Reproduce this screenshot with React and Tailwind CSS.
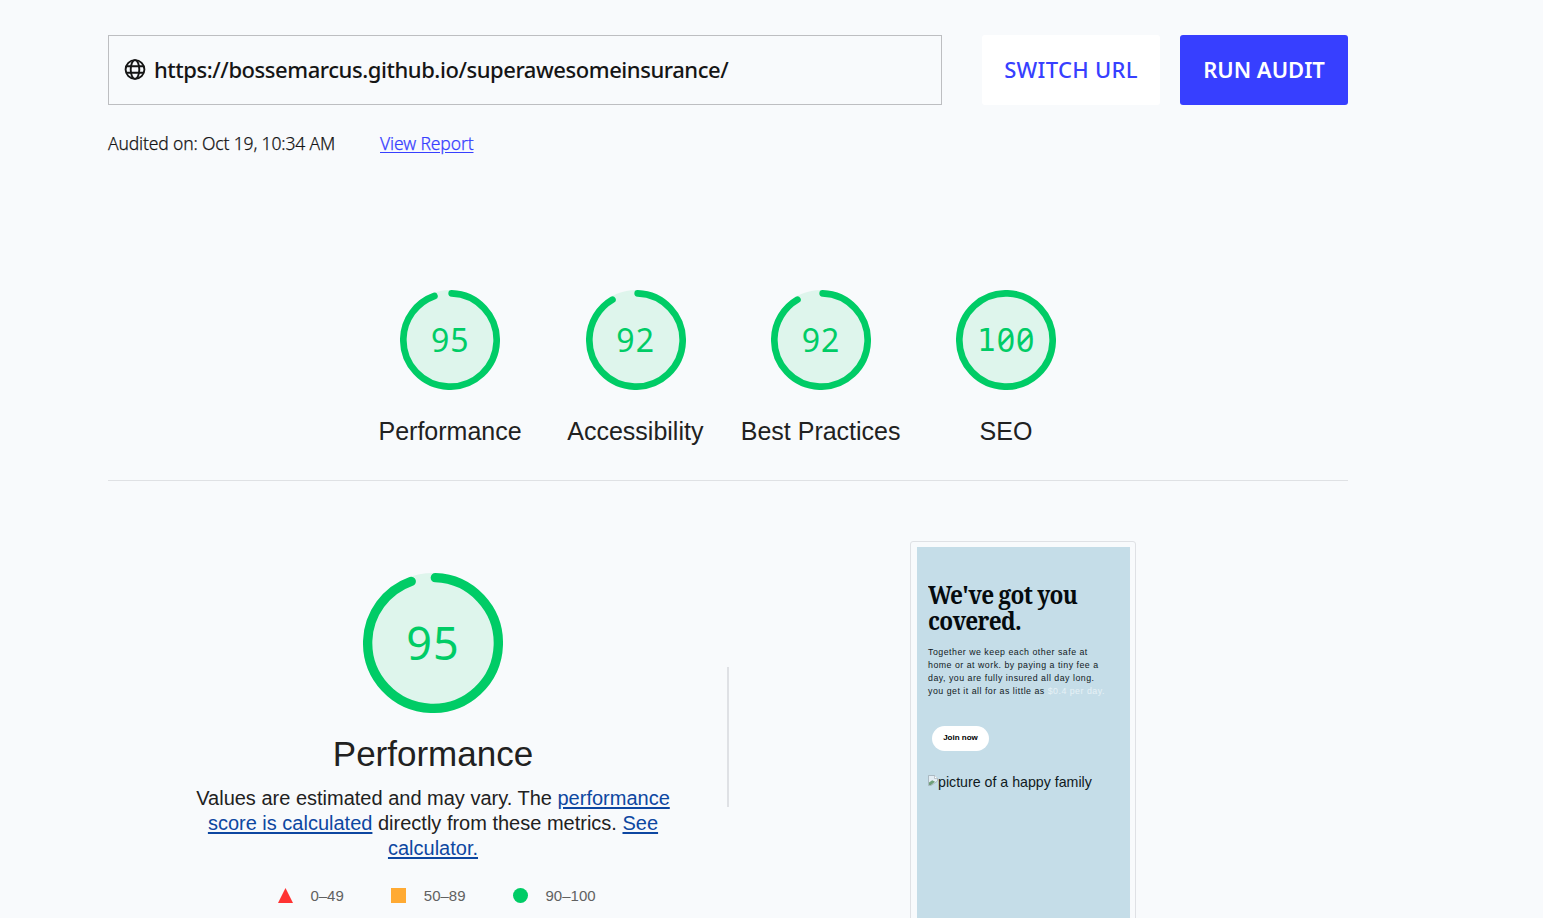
const GREEN = "#00cc66";

function Arc({ score, className }) {
  const circumference = 2 * Math.PI * 56;
  const length = score === 100 ? circumference : (score / 100) * circumference - 4;
  return (
    <svg viewBox="0 0 120 120" className={className} aria-hidden="true">
      <circle cx="60" cy="60" r="60" fill={GREEN} fillOpacity="0.1" />
      <circle
        cx="60"
        cy="60"
        r="56"
        fill="none"
        stroke={GREEN}
        strokeWidth="8"
        strokeLinecap="round"
        strokeDasharray={`${length} ${circumference}`}
        transform="rotate(-87.9537 60 60)"
      />
    </svg>
  );
}

function Digits({ value }) {
  return String(value)
    .split("")
    .map((d, i) => (
      <span
        key={i}
        className={
          d === "1"
            ? "font-['DejaVu_Sans_Mono'] text-[0.97em]"
            : "font-['Noto_Sans'] [font-feature-settings:'zero']"
        }
      >
        {d}
      </span>
    ));
}

function Gauge({ score, label }) {
  return (
    <div className="flex w-[185.3px] flex-col items-center">
      <div className="grid size-[100px] place-items-center">
        <Arc score={score} className="col-start-1 row-start-1 size-[100px]" />
        <div className="col-start-1 row-start-1 flex h-[32px] items-center text-[32px] leading-[32px] tracking-[1px] text-[#00cc66]">
          <Digits value={score} />
        </div>
      </div>
      <div className="mr-[0.6px] mt-[25px] whitespace-nowrap text-[25px] leading-[33px]">{label}</div>
    </div>
  );
}

function GlobeIcon() {
  return (
    <svg viewBox="0 0 22 22" className="mb-px size-[22px] shrink-0" fill="none" stroke="#151515" strokeWidth="1.9">
      <circle cx="11" cy="10.5" r="9.4" />
      <ellipse cx="11" cy="10.5" rx="4.3" ry="9.4" />
      <path d="M2.4 7.2h17.2M2.4 13.8h17.2" />
    </svg>
  );
}

function BrokenImage() {
  return (
    <svg viewBox="0 0 10 11" className="mt-[2px] h-[11px] w-[10px] shrink-0">
      <path d="M.5.5h6L9.5 3.5V6L3 10.5H.5z" fill="#e3edf4" stroke="#9aa7b0" strokeWidth=".7" />
      <path d="M1 7.6 4.2 5.2 7 6.8 3 9.9H1z" fill="#6f9f7a" />
      <path d="M6.5.5v3h3" fill="#fff" stroke="#9aa7b0" strokeWidth=".6" />
    </svg>
  );
}

function Link({ children }) {
  return (
    <a href="#calculator" className="text-[#0d47a1] underline decoration-2 underline-offset-[2px]">
      {children}
    </a>
  );
}

function Preview() {
  return (
    <div className="h-[400px] w-[226px] rounded-[3px] border border-[#dfe1e5] px-[6px] pt-[5px]">
      <div className="h-[394px] w-[213px] bg-[#c5dde8] pl-[11px] pt-[35px] text-[#10191d]">
        <h2 className="w-[160px] origin-left scale-x-[0.925] whitespace-nowrap font-['Noto_Serif','Liberation_Serif',serif] text-[24.5px] font-bold leading-[26px] tracking-[-0.8px] text-[#050b0e]">
          We've got you
          <br />
          covered.
        </h2>
        <p className="mt-[12.4px] whitespace-nowrap text-[8.8px] leading-[12.8px] tracking-[0.5px]">
          Together we keep each other safe at
          <br />
          home or at work. by paying a tiny fee a
          <br />
          day, you are fully insured all day long.
          <br />
          you get it all for as little as <span className="text-[#e6f1f6]">$0.4 per day.</span>
        </p>
        <div className="ml-[4px] mt-[28.4px] flex h-[25px] w-[57px] items-center justify-center rounded-full bg-white text-[8px] font-bold text-black">
          Join now
        </div>
        <div className="mt-[22px] flex">
          <BrokenImage />
          <span className="whitespace-nowrap text-[14.2px] leading-[18px]">picture of a happy family</span>
        </div>
      </div>
    </div>
  );
}

export default function App() {
  return (
    <div className="h-[918px] overflow-hidden bg-[#f8fafc] pl-[108px] pt-[35px] font-['Liberation_Sans',sans-serif] text-[#212121]">
      <main className="w-[1240px]">
        <header className="flex h-[70px] font-['Noto_Sans',sans-serif]">
          <div className="flex w-[834px] items-center border border-[#bdbec1] pl-[15px]">
            <GlobeIcon />
            <span className="ml-[8px] whitespace-nowrap pb-[2px] text-[22px] font-medium tracking-[-0.44px] text-[#151515]">
              https://bossemarcus.github.io/superawesomeinsurance/
            </span>
          </div>
          <button className="ml-[40px] w-[178px] whitespace-nowrap rounded-[3px] bg-white pb-[2px] text-[22px] font-medium tracking-[0.3px] text-[#373fff]">
            SWITCH URL
          </button>
          <button className="ml-[20px] w-[168px] whitespace-nowrap rounded-[3px] bg-[#373fff] pb-[2px] text-[22px] font-semibold text-white">
            RUN AUDIT
          </button>
        </header>
        <div className="mt-[25px] flex h-[26px] items-center whitespace-nowrap font-['Noto_Sans',sans-serif] text-[17.5px] font-light text-[#151515] [-webkit-text-stroke:0.25px_currentColor]">
          <span className="w-[272px] tracking-[-0.15px]">Audited on: Oct 19, 10:34 AM</span>
          <a href="#report" className="tracking-[-0.12px] text-[#373fff] underline underline-offset-2">
            View Report
          </a>
        </div>

        <section className="mt-[134px] flex h-[191px] justify-center border-b border-[#dfe1e4] pl-[0.6px]">
          <Gauge score={95} label="Performance" />
          <Gauge score={92} label="Accessibility" />
          <Gauge score={92} label="Best Practices" />
          <Gauge score={100} label="SEO" />
        </section>

        <section className="flex pt-[60px]">
          <div className="flex w-[619px] flex-col items-center pl-[31px] pt-[32px]">
            <div className="grid size-[140px] place-items-center">
              <Arc score={95} className="col-start-1 row-start-1 size-[140px]" />
              <div className="col-start-1 row-start-1 text-[45px] leading-none tracking-[1px] text-[#00cc66]">
                <Digits value={95} />
              </div>
            </div>
            <h1 className="mt-[20px] text-[35px] leading-[42px]">Performance</h1>
            <p className="mt-[11px] whitespace-nowrap text-center text-[20px] leading-[25px]">
              Values are estimated and may vary. The <Link>performance</Link>
              <br />
              <Link>score is calculated</Link> directly from these metrics. <Link>See</Link>
              <br />
              <Link>calculator.</Link>
            </p>
            <div className="mt-[25px] flex items-center pl-[8px] text-[15px] leading-[20px] text-[#616161]">
              <svg viewBox="0 0 15 15" className="mb-[2px] mr-[17px] size-[15px]">
                <path d="M7.5 0 15 15H0z" fill="#ff3333" />
              </svg>
              0–49
              <span className="mb-[2px] ml-[47.5px] mr-[17.5px] size-[15px] bg-[#ffaa33]" />
              50–89
              <span className="mb-[2px] ml-[47.5px] mr-[17.5px] size-[15px] rounded-full bg-[#00cc66]" />
              90–100
            </div>
          </div>
          <div className="mt-[126px] h-[140px] w-[2px] bg-[#dfe1e5]" />
          <div className="ml-[181px]">
            <Preview />
          </div>
        </section>
      </main>
    </div>
  );
}
